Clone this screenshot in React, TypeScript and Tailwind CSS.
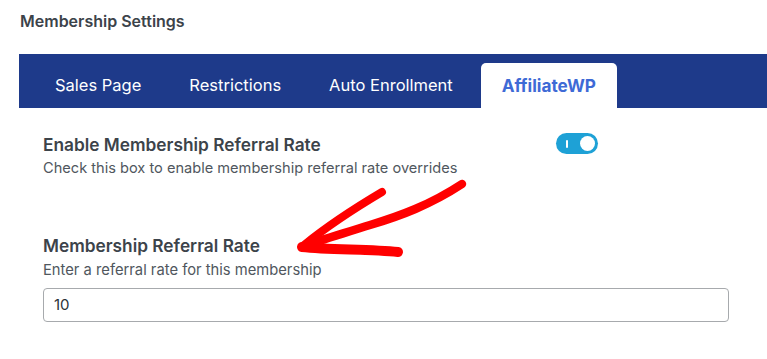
import React from "react";

export default function App() {
  const font = { fontFamily: "Inter, 'Noto Sans', 'Liberation Sans', sans-serif" };
  return (
    <div className="relative w-[767px] h-[359px] bg-white overflow-hidden" style={font}>
      <div className="pl-[20px] pt-[11px] text-[16px] leading-[21px] font-semibold text-[#3c434a]">
        Membership Settings
      </div>
      <div className="ml-[19px] mt-[22px] h-[54px] bg-[#1e3a8a] flex items-end text-[16.5px] text-white">
        <div className="ml-[12px] h-[45px] px-[24px] flex items-center">Sales Page</div>
        <div className="h-[45px] px-[24px] flex items-center">Restrictions</div>
        <div className="h-[45px] px-[24px] flex items-center">Auto Enrollment</div>
        <div className="ml-[4px] h-[45px] px-[21px] flex items-center bg-white rounded-t-[5px] font-bold text-[17.2px] text-[#3e6ad6]">
          AffiliateWP
        </div>
      </div>

      <div className="ml-[43px] w-[555px] mt-[25px] flex justify-between items-start">
        <div>
          <div className="text-[17.3px] leading-[24px] font-semibold text-[#3c434a]">
            Enable Membership Referral Rate
          </div>
          <div className="mt-[1px] text-[14.6px] leading-[20px] text-[#50575e]">
            Check this box to enable membership referral rate overrides
          </div>
        </div>
        <div className="mt-[0px] w-[42px] h-[21px] rounded-full bg-[#1ea1d6] flex items-center justify-between pl-[10px] pr-[3px]">
          <div className="w-[2px] h-[8px] bg-white rounded-sm" />
          <div className="w-[15px] h-[15px] rounded-full bg-white" />
        </div>
      </div>

      <div className="ml-[43px] mt-[56px]">
        <div className="text-[17.3px] leading-[24px] font-semibold text-[#3c434a]">
          Membership Referral Rate
        </div>
        <div className="mt-[3px] text-[14.75px] leading-[18px] text-[#50575e]">
          Enter a referral rate for this membership
        </div>
        <div className="mt-[9px] w-[686px] h-[34px] border border-[#a7aaad] rounded-[4px] flex items-center pl-[10px] text-[15px] text-[#2c3338]">
          10
        </div>
      </div>

      <svg
        className="absolute left-0 top-0 pointer-events-none"
        width="767"
        height="359"
        viewBox="0 0 767 359"
      >
        <path
          d="M462 184 C 430 205, 400 216, 370 225 C 345 233, 320 240, 304 246"
          fill="none"
          stroke="#ff0000"
          strokeWidth="8.5"
          strokeLinecap="round"
        />
        <path
          d="M382 192 C 355 208, 325 228, 304 245"
          fill="none"
          stroke="#ff0000"
          strokeWidth="8"
          strokeLinecap="round"
        />
        <path
          d="M302 247 C 330 250, 370 249, 398 252"
          fill="none"
          stroke="#ff0000"
          strokeWidth="10"
          strokeLinecap="round"
        />
      </svg>
    </div>
  );
}
